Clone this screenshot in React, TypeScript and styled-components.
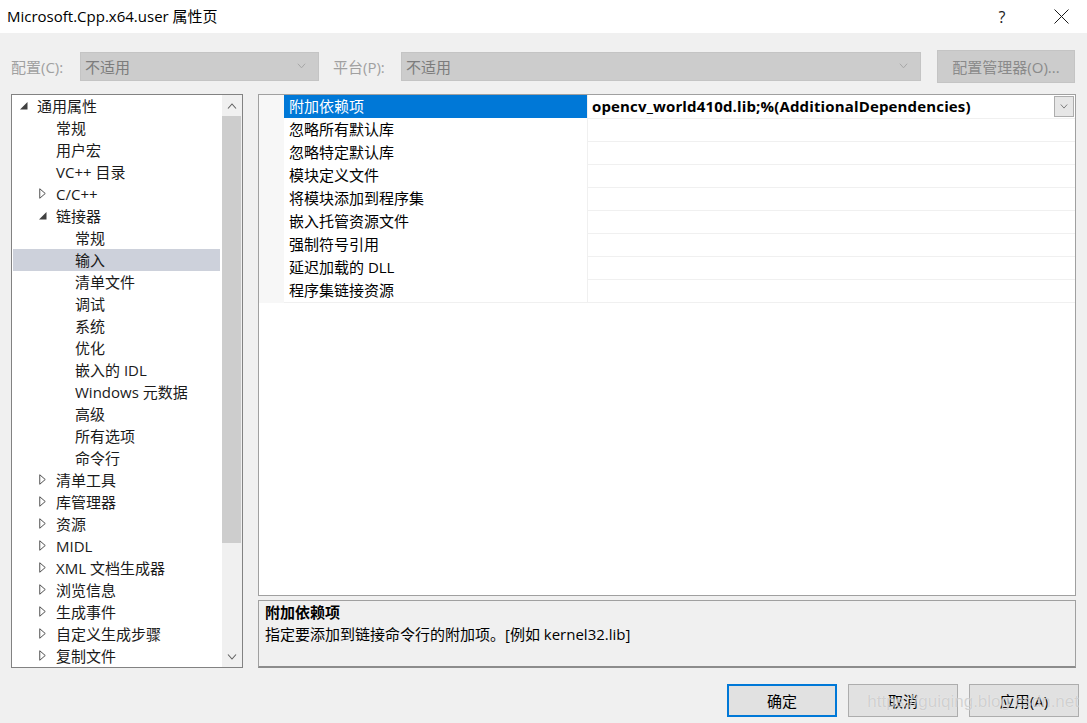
import React from 'react';
import styled, { createGlobalStyle } from 'styled-components';

const GlobalStyle = createGlobalStyle`
  html, body { margin: 0; padding: 0; background: #f0f0f0; }
  body { font-family: "Open Sans", "Noto Sans CJK SC", sans-serif; }
`;

const Window = styled.div`
  position: relative;
  width: 1087px;
  height: 723px;
  overflow: hidden;
  display: flex;
  flex-direction: column;
  background: #f0f0f0;
  font-family: "Open Sans", "Noto Sans CJK SC", sans-serif;
  font-size: 15px;
  color: #000;
`;

const TitleBar = styled.div`
  height: 33px;
  background: #fff;
  display: flex;
  align-items: center;
  padding: 0 3px 0 7px;
`;

const Title = styled.div`
  flex: 1;
  font-size: 15px;
  line-height: 20px;
  color: #000;
  padding-bottom: 2px;
`;

const CaptionButton = styled.div<{ $gap?: number }>`
  width: 46px;
  height: 33px;
  display: flex;
  align-items: center;
  justify-content: center;
  margin-right: ${p => p.$gap ?? 0}px;
  font-size: 16px;
  color: #1a1a1a;
`;

const ConfigRow = styled.div`
  display: flex;
  align-items: center;
  height: 33px;
  margin: 17px 11px 0 11px;
`;

const FieldLabel = styled.span<{ $w: number; $ml?: number }>`
  width: ${p => p.$w}px;
  margin-left: ${p => p.$ml ?? 0}px;
  color: #a0a0a0;
  font-size: 15px;
  white-space: nowrap;
  padding-bottom: 1px;
`;

const Combo = styled.div<{ $w: number }>`
  width: ${p => p.$w}px;
  height: 29px;
  box-sizing: border-box;
  background: #cccccc;
  border: 1px solid #c4c4c4;
  display: flex;
  align-items: center;
  padding: 0 12px 1px 4px;
  color: #7c7c7c;
  font-size: 15px;
`;

const ComboText = styled.span`
  flex: 1;
`;

const DisabledButton = styled.div`
  margin-left: 16px;
  width: 138px;
  height: 33px;
  box-sizing: border-box;
  background: #cccccc;
  border: 1px solid #c4c4c4;
  display: flex;
  align-items: center;
  justify-content: center;
  color: #8a8a8a;
  font-size: 15px;
  padding-bottom: 1px;
`;

const Main = styled.div`
  display: flex;
  gap: 15px;
  height: 574px;
  margin: 11px 11px 0 11px;
`;

const TreePanel = styled.div`
  width: 232px;
  box-sizing: border-box;
  border: 1px solid #828282;
  background: #fff;
  display: flex;
`;

const TreeList = styled.div`
  flex: 1;
  overflow: hidden;
  display: flex;
  flex-direction: column;
`;

const TreeRow = styled.div<{ $level: number; $selected?: boolean }>`
  height: 22px;
  box-sizing: border-box;
  flex: none;
  display: flex;
  align-items: center;
  margin: 0 2px 0 1px;
  padding-left: ${p => 7 + p.$level * 19}px;
  padding-bottom: 1px;
  background: ${p => (p.$selected ? '#cdd1db' : 'transparent')};
  color: #1a1a1a;
  font-size: 15px;
  white-space: nowrap;
`;

const Expander = styled.span`
  width: 17px;
  flex: none;
  display: flex;
  align-items: center;
`;

const ScrollBar = styled.div`
  width: 20px;
  flex: none;
  background: #f0f0f0;
  display: flex;
  flex-direction: column;
`;

const ScrollArrow = styled.div`
  height: 21px;
  display: flex;
  align-items: center;
  justify-content: center;
`;

const ScrollThumb = styled.div`
  height: 427px;
  background: #cdcdcd;
  margin: 0 1px 0 0;
`;

const ScrollTrack = styled.div`
  flex: 1;
`;

const RightColumn = styled.div`
  flex: 1;
  display: flex;
  flex-direction: column;
  gap: 4px;
`;

const Grid = styled.div`
  height: 502px;
  box-sizing: border-box;
  border: 1px solid #a0a0a0;
  background: #fff;
  display: flex;
  flex-direction: column;
`;

const GridRow = styled.div`
  height: 23px;
  box-sizing: border-box;
  display: grid;
  grid-template-columns: 25px 304px 1fr;
`;

const Gutter = styled.div`
  background: #f7f7f7;
`;

const NameCell = styled.div<{ $selected?: boolean }>`
  display: flex;
  align-items: center;
  padding: 0 0 2px 5px;
  background: ${p => (p.$selected ? '#0078d7' : '#fff')};
  color: ${p => (p.$selected ? '#fff' : '#000')};
  border-right: 1px solid #f0f0f0;
  border-bottom: 1px solid #f0f0f0;
  font-size: 15px;
  white-space: nowrap;
`;

const ValueCell = styled.div`
  display: flex;
  align-items: center;
  padding: 0 0 1px 4px;
  border-bottom: 1px solid #f0f0f0;
  font-size: 15px;
  font-weight: 700;
  letter-spacing: 0.15px;
  white-space: nowrap;
`;

const ValueText = styled.span`
  flex: 1;
  padding-bottom: 1px;
`;

const DropButton = styled.div`
  width: 20px;
  height: 21px;
  box-sizing: border-box;
  margin-right: 1px;
  background: #e6e6e6;
  border: 1px solid #adadad;
  display: flex;
  align-items: center;
  justify-content: center;
`;

const Description = styled.div`
  height: 68px;
  box-sizing: border-box;
  border: 1px solid #a0a0a0;
  border-bottom: 2px solid #8c8c8c;
  background: #f0f0f0;
  padding: 0 6px;
`;

const DescTitle = styled.div`
  font-weight: 700;
  font-size: 15px;
  line-height: 22px;
  color: #000;
`;

const DescText = styled.div`
  font-size: 15px;
  line-height: 22px;
  color: #000;
`;

const Footer = styled.div`
  display: flex;
  justify-content: flex-end;
  gap: 11px;
  margin-top: 16px;
  padding-right: 8px;
`;

const DialogButton = styled.div<{ $default?: boolean }>`
  width: 110px;
  height: 33px;
  box-sizing: border-box;
  background: #e1e1e1;
  border: ${p => (p.$default ? '2px solid #0078d7' : '1px solid #adadad')};
  display: flex;
  align-items: center;
  justify-content: center;
  font-size: 15px;
  color: #000;
  padding-bottom: 1px;
`;

const Watermark = styled.div`
  position: absolute;
  right: 8px;
  bottom: 11px;
  font-family: "Liberation Sans", Arial, sans-serif;
  font-size: 17px;
  color: rgba(170, 170, 170, 0.5);
  text-shadow: 0 0 1px rgba(255, 255, 255, 0.8);
  pointer-events: none;
`;

const ExpandedIcon = () => (
  <svg width="8" height="8" viewBox="0 0 8 8">
    <path d="M7.5 0 L7.5 7.5 L0 7.5 Z" fill="#404040" />
  </svg>
);

const CollapsedIcon = () => (
  <svg width="7" height="11" viewBox="0 0 7 11">
    <path d="M0.75 0.75 L6.25 5.5 L0.75 10.25 Z" fill="none" stroke="#505050" strokeWidth="1" />
  </svg>
);

const Chevron = ({ up, color = '#a6a6a6', w = 9 }: { up?: boolean; color?: string; w?: number }) => (
  <svg width={w} height={Math.round(w / 2) + 1} viewBox="0 0 10 6">
    <path d={up ? 'M1 5.5 L5 1 L9 5.5' : 'M1 0.5 L5 5 L9 0.5'} fill="none" stroke={color} strokeWidth="1.1" />
  </svg>
);

type Node = { label: string; level: number; state?: 'open' | 'closed'; selected?: boolean };

const tree: Node[] = [
  { label: '通用属性', level: 0, state: 'open' },
  { label: '常规', level: 1 },
  { label: '用户宏', level: 1 },
  { label: 'VC++ 目录', level: 1 },
  { label: 'C/C++', level: 1, state: 'closed' },
  { label: '链接器', level: 1, state: 'open' },
  { label: '常规', level: 2 },
  { label: '输入', level: 2, selected: true },
  { label: '清单文件', level: 2 },
  { label: '调试', level: 2 },
  { label: '系统', level: 2 },
  { label: '优化', level: 2 },
  { label: '嵌入的 IDL', level: 2 },
  { label: 'Windows 元数据', level: 2 },
  { label: '高级', level: 2 },
  { label: '所有选项', level: 2 },
  { label: '命令行', level: 2 },
  { label: '清单工具', level: 1, state: 'closed' },
  { label: '库管理器', level: 1, state: 'closed' },
  { label: '资源', level: 1, state: 'closed' },
  { label: 'MIDL', level: 1, state: 'closed' },
  { label: 'XML 文档生成器', level: 1, state: 'closed' },
  { label: '浏览信息', level: 1, state: 'closed' },
  { label: '生成事件', level: 1, state: 'closed' },
  { label: '自定义生成步骤', level: 1, state: 'closed' },
  { label: '复制文件', level: 1, state: 'closed' },
];

const props = [
  '附加依赖项',
  '忽略所有默认库',
  '忽略特定默认库',
  '模块定义文件',
  '将模块添加到程序集',
  '嵌入托管资源文件',
  '强制符号引用',
  '延迟加载的 DLL',
  '程序集链接资源',
];

export default function App() {
  return (
    <Window>
      <GlobalStyle />
      <TitleBar>
        <Title>Microsoft.Cpp.x64.user 属性页</Title>
        <CaptionButton $gap={13}>?</CaptionButton>
        <CaptionButton>
          <svg width="15" height="15" viewBox="0 0 15 15">
            <path d="M0.5 0.5 L14.5 14.5 M14.5 0.5 L0.5 14.5" stroke="#1a1a1a" strokeWidth="1" />
          </svg>
        </CaptionButton>
      </TitleBar>

      <ConfigRow>
        <FieldLabel $w={69}>配置(C):</FieldLabel>
        <Combo $w={239}>
          <ComboText>不适用</ComboText>
          <Chevron />
        </Combo>
        <FieldLabel $w={68} $ml={14}>平台(P):</FieldLabel>
        <Combo $w={520}>
          <ComboText>不适用</ComboText>
          <Chevron />
        </Combo>
        <DisabledButton>配置管理器(O)...</DisabledButton>
      </ConfigRow>

      <Main>
        <TreePanel>
          <TreeList>
            {tree.map((n, i) => (
              <TreeRow key={i} $level={n.level} $selected={n.selected}>
                <Expander>
                  {n.state === 'open' && <ExpandedIcon />}
                  {n.state === 'closed' && <CollapsedIcon />}
                </Expander>
                {n.label}
              </TreeRow>
            ))}
          </TreeList>
          <ScrollBar>
            <ScrollArrow>
              <Chevron up color="#606060" w={10} />
            </ScrollArrow>
            <ScrollThumb />
            <ScrollTrack />
            <ScrollArrow>
              <Chevron color="#606060" w={10} />
            </ScrollArrow>
          </ScrollBar>
        </TreePanel>

        <RightColumn>
          <Grid>
            {props.map((p, i) => (
              <GridRow key={i}>
                <Gutter />
                <NameCell $selected={i === 0}>{p}</NameCell>
                <ValueCell>
                  {i === 0 && (
                    <>
                      <ValueText>opencv_world410d.lib;%(AdditionalDependencies)</ValueText>
                      <DropButton>
                        <Chevron color="#707070" w={8} />
                      </DropButton>
                    </>
                  )}
                </ValueCell>
              </GridRow>
            ))}
          </Grid>
          <Description>
            <DescTitle>附加依赖项</DescTitle>
            <DescText>指定要添加到链接命令行的附加项。[例如 kernel32.lib]</DescText>
          </Description>
        </RightColumn>
      </Main>

      <Footer>
        <DialogButton $default>确定</DialogButton>
        <DialogButton>取消</DialogButton>
        <DialogButton>应用(A)</DialogButton>
      </Footer>

      <Watermark>https://guiqing.blog.csdn.net</Watermark>
    </Window>
  );
}
